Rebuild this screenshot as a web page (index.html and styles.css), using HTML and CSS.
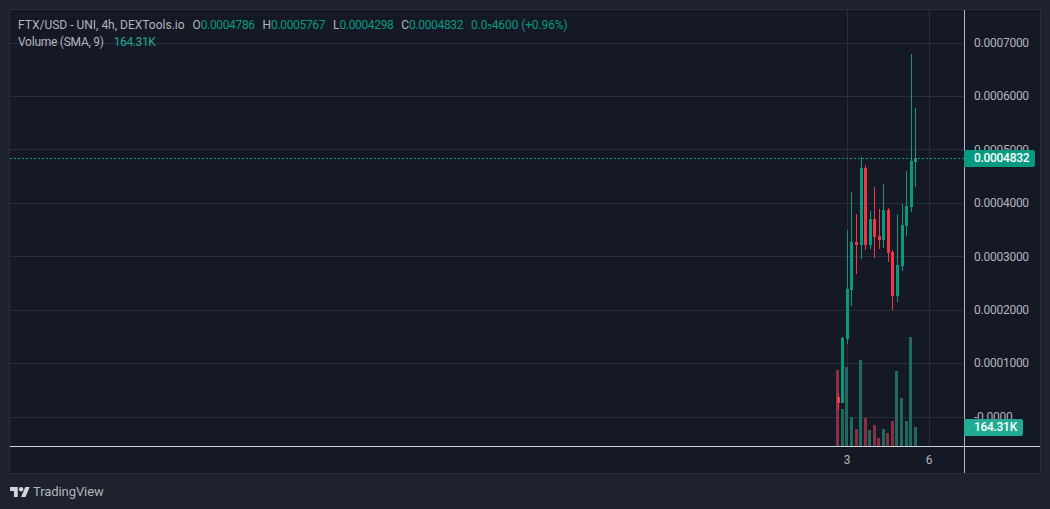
FILE: index.html
```html
<!DOCTYPE html>
<html lang="en">
<head>
<meta charset="utf-8">
<title>FTX/USD chart</title>
<link rel="stylesheet" href="styles.css">
</head>
<body>
<main class="widget">
  <section class="chart">
    <div class="plot">
      <svg class="canvas" viewBox="10 10 954 436" width="954" height="436" aria-hidden="true">
        <g class="grid">
          <path d="M10 43.5H964M10 96.5H964M10 149.5H964M10 203.5H964M10 256.5H964M10 310.5H964M10 363.5H964M10 417.5H964M847.5 10V446M929.5 10V446"/>
        </g>
        <g class="vol-up">
          <rect x="841" y="409" width="3" height="37"/><rect x="845" y="367" width="3" height="79"/><rect x="850" y="417" width="3" height="29"/><rect x="859" y="360" width="3" height="86"/><rect x="868" y="430" width="3" height="16"/><rect x="882" y="429" width="3" height="17"/><rect x="895" y="371" width="3" height="75"/><rect x="900" y="398" width="3" height="48"/><rect x="905" y="421" width="3" height="25"/><rect x="909" y="337" width="3" height="109"/><rect x="914" y="427" width="3" height="19"/>
        </g>
        <g class="vol-down">
          <rect x="836" y="370" width="3" height="76"/><rect x="855" y="429" width="3" height="17"/><rect x="864" y="418" width="3" height="28"/><rect x="873" y="425" width="3" height="21"/><rect x="877" y="438" width="3" height="8"/><rect x="886" y="433" width="3" height="13"/><rect x="891" y="421" width="3" height="25"/>
        </g>
        <g class="up">
          <rect x="842" y="337" width="1" height="66"/><rect x="841" y="338" width="3" height="65"/>
          <rect x="847" y="230" width="1" height="114"/><rect x="846" y="289" width="3" height="50"/>
          <rect x="851" y="192" width="1" height="114"/><rect x="850" y="242" width="3" height="48"/>
          <rect x="861" y="157" width="1" height="102"/><rect x="860" y="168" width="3" height="77"/>
          <rect x="870" y="211" width="1" height="38"/><rect x="869" y="219" width="3" height="26"/>
          <rect x="883" y="184" width="1" height="64"/><rect x="882" y="210" width="3" height="30"/>
          <rect x="897" y="214" width="1" height="88"/><rect x="896" y="265" width="3" height="31"/>
          <rect x="902" y="204" width="1" height="67"/><rect x="901" y="225" width="3" height="41"/>
          <rect x="906" y="171" width="1" height="65"/><rect x="905" y="206" width="3" height="20"/>
          <rect x="911" y="54" width="1" height="158"/><rect x="910" y="161" width="3" height="46"/>
          <rect x="915" y="108" width="1" height="79"/><rect x="914" y="158" width="3" height="4"/>
        </g>
        <g class="down">
          <rect x="838" y="393" width="1" height="17"/><rect x="837" y="397" width="3" height="6"/>
          <rect x="856" y="214" width="1" height="60"/><rect x="855" y="242" width="3" height="3"/>
          <rect x="865" y="165" width="1" height="85"/><rect x="864" y="168" width="3" height="77"/>
          <rect x="874" y="187" width="1" height="71"/><rect x="873" y="219" width="3" height="18"/>
          <rect x="879" y="209" width="1" height="40"/><rect x="878" y="236" width="3" height="4"/>
          <rect x="888" y="208" width="1" height="54"/><rect x="887" y="210" width="3" height="43"/>
          <rect x="892" y="250" width="1" height="60"/><rect x="891" y="252" width="3" height="44"/>
        </g>
        <path class="last-price" d="M10 158.5H964"/>
      </svg>
      <div class="legend">
        <div class="legend-row">
          <span class="title">FTX/USD - UNI, 4h, DEXTools.io</span>
          <span class="ohlc">O<b>0.0004786</b></span>
          <span class="ohlc">H<b>0.0005767</b></span>
          <span class="ohlc">L<b>0.0004298</b></span>
          <span class="ohlc">C<b>0.0004832</b></span>
          <b class="change">0.0<small>5</small>4600 (+0.96%)</b>
        </div>
        <div class="legend-row legend-row-volume">
          <span class="title">Volume (SMA, 9)</span>
          <b class="vol-value">164.31K</b>
        </div>
      </div>
    </div>
    <div class="price-scale">
      <span>0.0007000</span>
      <span>0.0006000</span>
      <span>0.0005000</span>
      <span>0.0004000</span>
      <span>0.0003000</span>
      <span>0.0002000</span>
      <span>0.0001000</span>
      <span>-0.0000</span>
    </div>
    <div class="time-scale">
      <span class="tick tick-3">3</span>
      <span class="tick tick-6">6</span>
    </div>
    <div class="corner"></div>
    <em class="tag tag-price">0.0004832</em>
    <em class="tag tag-volume">164.31K</em>
  </section>
  <footer class="brand">
    <svg class="brand-mark" viewBox="0 4 36 18" width="20" height="10" aria-hidden="true">
      <path d="M14 22H7V11H0V4h14v18zM28 22h-8l7.500-18h8L28 22z"/>
      <circle cx="20" cy="8" r="4"/>
    </svg>
    <span>TradingView</span>
  </footer>
</main>
</body>
</html>
```
FILE: styles.css
```css
* { box-sizing: border-box; }
html, body { margin: 0; height: 100%; }
body {
  background: #1e222d;
  font-family: "Liberation Sans", Arial, sans-serif;
  color: #b2b5be;
  overflow: hidden;
}
.widget { width: 1050px; height: 509px; padding: 9px 9px 0; }
.chart {
  display: grid;
  grid-template-columns: 954px 76px;
  grid-template-rows: 436px 27px;
  width: 1032px;
  height: 465px;
  border: 1px solid #2a2e39;
  background: #151825;
  position: relative;
}
.plot { position: relative; overflow: hidden; }
.canvas { display: block; }
.grid path { stroke: #2a2e39; stroke-width: 1; fill: none; }
.vol-up { fill: #1e6a5e; }
.vol-down { fill: #8a3044; }
.up { fill: #089981; }
.down { fill: #f23645; }
.last-price { stroke: #089981; stroke-width: 1; stroke-dasharray: 2 2; fill: none; }
.legend {
  position: absolute;
  left: 8px;
  top: 7px;
  font: 12px/17px Roboto, sans-serif;
}
.legend-row { display: flex; gap: 7.8px; height: 17px; white-space: nowrap; }
.legend-row-volume { gap: 10px; }
.legend-row-volume .title { letter-spacing: -0.25px; }
.legend b { font-weight: 400; color: #089981; letter-spacing: -0.34px; }
.legend .change { letter-spacing: -0.1px; }
.legend .vol-value { color: #22ab94; letter-spacing: -0.4px; }
.legend small { font-size: 8px; }
.price-scale {
  display: flex;
  flex-direction: column;
  padding: 7px 0 0 9px;
  border-left: 1px solid #b2b5be;
  font: 12px/53.4px Roboto, sans-serif;
  letter-spacing: -0.25px;
  overflow: hidden;
}
.price-scale span { flex: 0 0 53.4px; }
.tag {
  position: absolute;
  left: 954px;
  height: 17px;
  padding-left: 10px;
  font: 500 12px/17px Roboto, sans-serif;
  letter-spacing: -0.3px;
  color: #fff;
  border-radius: 0 2px 2px 0;
}
.tag-price { top: 140px; width: 71px; background: #089981; }
.tag-volume { top: 409px; width: 59px; background: #22ab94; }
.time-scale { border-top: 1px solid #d1d4dc; position: relative; font: 12px/26px Roboto, sans-serif; }
.tick { position: absolute; top: 0; transform: translateX(-50%); }
.tick-3 { left: 837px; }
.tick-6 { left: 919px; }
.corner { border-top: 1px solid #d1d4dc; border-left: 1px solid #b2b5be; }
.brand {
  display: flex;
  align-items: center;
  gap: 3px;
  height: 36px;
  padding-left: 1px;
  font: 13px/18px Roboto, sans-serif;
  letter-spacing: -0.08px;
  color: #b2b5be;
}
.brand-mark { fill: #d1d4dc; }
```
